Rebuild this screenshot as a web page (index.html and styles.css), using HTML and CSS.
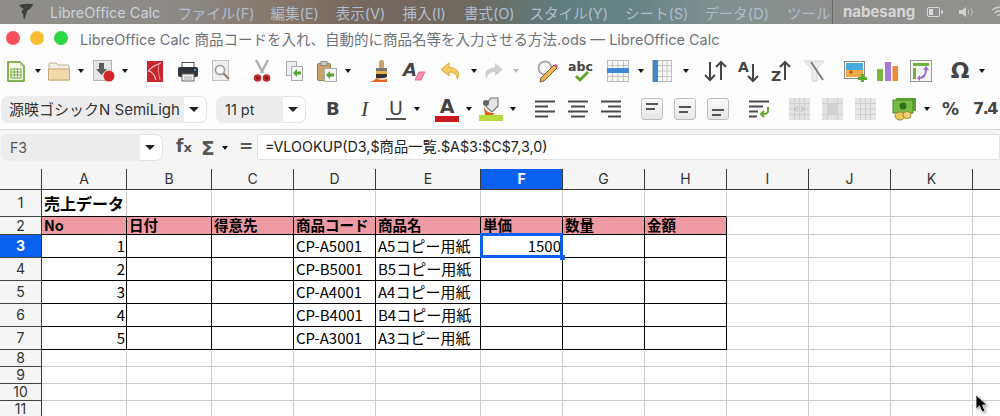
FILE: index.html
```html
<!DOCTYPE html>
<html lang="ja">
<head>
  <meta charset="UTF-8" />
  <title>LibreOffice Calc</title>
  <link rel="stylesheet" href="styles.css">
</head>
<body>
  <!-- macのメニューバー -->
  <div class="menubar">
    <svg class="ml-18" width="16" height="18" viewBox="0 0 16 18"><path d="M1 2 Q8 0 15 1 Q14 5 10 7 Q8 9 8 12 L6 17 L5 11 Q2 8 6 6 Q3 5 1 2Z" fill="#3f3f3f"/></svg>
    <span class="menu-item app ml-16">LibreOffice Calc</span>
    <span class="menu-item ml-17">ファイル(F)</span>
    <span class="menu-item ml-16">編集(E)</span>
    <span class="menu-item ml-17">表示(V)</span>
    <span class="menu-item ml-17">挿入(I)</span>
    <span class="menu-item ml-18">書式(O)</span>
    <span class="menu-item ml-15">スタイル(Y)</span>
    <span class="menu-item ml-17">シート(S)</span>
    <span class="menu-item ml-16">データ(D)</span>
    <span class="menu-item menu-cut">ツール</span>
    <span class="menu-user">nabesang</span>
    <svg class="ml-12" width="16" height="12" viewBox="0 0 16 12"><rect x="0.500" y="1.500" width="12" height="9" rx="1.500" fill="none" stroke="#d8d8d8"/><rect x="2" y="3" width="4" height="6" fill="#d8d8d8"/><rect x="14" y="4.500" width="2" height="3" fill="#d8d8d8"/></svg>
    <svg class="ml-16" width="16" height="12" viewBox="0 0 16 12"><path d="M0 4H3L7 1V11L3 8H0Z" fill="#d0d0d0"/><path d="M9 3Q11 6 9 9M11.500 1.500Q15 6 11.500 10.500" fill="none" stroke="#c4c4c4"/></svg>
    <svg class="ml-16" width="18" height="13" viewBox="0 0 18 13"><path d="M1 4Q9 -2 17 4M3.500 7Q9 2.500 14.500 7M6 10Q9 7.500 12 10" fill="none" stroke="#cfcfcf" stroke-width="1.300"/></svg>
  </div>

  <div class="titlebar">
    <i class="light red"></i><i class="light yellow"></i><i class="light green"></i>
    <span class="title">LibreOffice Calc 商品コードを入れ、自動的に商品名等を入力させる方法.ods — LibreOffice Calc</span>
  </div>

  <!-- 標準ツールバー -->
  <div class="toolbar tb-main">
    <svg width="18" height="21" viewBox="0 0 18 21"><path d="M1 1H13L17 5V20H1Z" fill="#f4f9ea" stroke="#5f9e1c" stroke-width="1.500"/><path d="M13 1V5H17Z" fill="#bcd98e"/><rect x="4" y="8" width="10" height="9" fill="#fff" stroke="#6fa83a"/><path d="M4 11H14M4 14H14M7.300 8V17M10.600 8V17" stroke="#6fa83a"/></svg>
    <span class="drop ml-10"></span>
    <svg class="ml-7" width="22" height="19" viewBox="0 0 22 19"><path d="M1 18V2Q1 1 2 1H8L10 3H20Q21 3 21 4V18Z" fill="#f3f0ea" stroke="#c6ad85"/><path d="M0.500 7H21.500V18H0.500Z" fill="#f2d9ae" stroke="#c9a873"/></svg>
    <span class="drop ml-8"></span>
    <svg class="ml-9" width="22" height="22" viewBox="0 0 22 22"><rect x="0.500" y="0.500" width="18" height="20" fill="#e6e6e6" stroke="#b5b5b5"/><path d="M6 3H11V9H14L8.500 15L3 9H6Z" fill="#5b5b5b"/><circle cx="16" cy="16" r="5.500" fill="#d3262b"/></svg>
    <span class="drop ml-7"></span>
    <svg class="ml-19" width="16" height="21" viewBox="0 0 16 21"><rect width="16" height="21" fill="#c8262e"/><path d="M14 2Q5 5 1.500 10Q7 11 9 19" fill="none" stroke="#f7d5d5" stroke-width="1.200"/><path d="M12 2Q10 10 13 19" fill="none" stroke="#e98b8f"/></svg>
    <svg class="ml-15" width="20" height="19" viewBox="0 0 20 19"><rect x="4" y="0.500" width="12" height="6" fill="#fff" stroke="#555"/><rect x="0" y="5" width="20" height="10" rx="2" fill="#2f3337"/><rect x="16" y="7" width="2" height="2" fill="#2ea7e0"/><rect x="4" y="12" width="12" height="7" fill="#f2f2f2" stroke="#666"/><path d="M6 15H14M6 17H14" stroke="#aaa"/></svg>
    <svg class="ml-14" width="18" height="22" viewBox="0 0 18 22"><rect x="0.500" y="0.500" width="16" height="20" fill="#eee" stroke="#c4c4c4"/><circle cx="8" cy="10" r="4.500" fill="#fafafa" stroke="#999" stroke-width="1.500"/><path d="M11.500 13.500L17 19" stroke="#8a7a66" stroke-width="2"/></svg>
    <svg class="ml-23" width="18" height="23" viewBox="0 0 18 23"><path d="M3 0L10 13M15 0L8 13" stroke="#aeb1b4" stroke-width="2.500"/><circle cx="4.500" cy="18" r="3.800" fill="#c1272d"/><circle cx="13.500" cy="18" r="3.800" fill="#c1272d"/><circle cx="4.500" cy="18" r="1.300" fill="#7d1015"/><circle cx="13.500" cy="18" r="1.300" fill="#7d1015"/></svg>
    <svg class="ml-15" width="17" height="20" viewBox="0 0 17 20"><rect x="0.500" y="0.500" width="10" height="14" fill="#eee" stroke="#aaa"/><rect x="5.500" y="5.500" width="11" height="14" fill="#f5f5f5" stroke="#aaa"/><path d="M7 12L11 8V10.500H15V13.500H11V16Z" fill="#55a630"/></svg>
    <svg class="ml-14" width="20" height="21" viewBox="0 0 20 21"><rect x="0.500" y="2.500" width="13" height="17" rx="1" fill="#c9a26a" stroke="#9b7a48"/><rect x="4" y="0.500" width="6" height="4" fill="#ccc" stroke="#888"/><rect x="7.500" y="7.500" width="12" height="13" fill="#f5f5f5" stroke="#aaa"/><path d="M9 14L13 10V12.500H17V15.500H13V18Z" fill="#55a630"/></svg>
    <span class="drop ml-8"></span>
    <svg class="ml-18" width="20" height="23" viewBox="0 0 20 23"><rect x="10" y="0" width="5" height="9" rx="2" fill="#c9a26a"/><rect x="7" y="8" width="11" height="3" fill="#777"/><path d="M7 11H18V17Q14 19 7 18Z" fill="#e8b04a"/><path d="M7 14H18V17Q14 19 7 18Z" fill="#33312e"/><path d="M0 22H18V19Q10 21 7 18Q6 21 0 22Z" fill="#e8631c"/></svg>
    <svg class="ml-14" width="22" height="20" viewBox="0 0 22 20"><text class="svg-a" x="0" y="15">A</text><path d="M12 19L16 11H22L18 19Z" fill="#f58cb4" stroke="#e56c9a"/></svg>
    <svg class="ml-16" width="20" height="16" viewBox="0 0 20 16"><path d="M8 0L0 6.500L8 13V9Q15 8.500 16.500 16Q21 6 8 4Z" fill="#f4c95d" stroke="#dca63a"/></svg>
    <span class="drop ml-10"></span>
    <svg class="ml-8" width="18" height="16" viewBox="0 0 18 16"><path d="M10 0L18 6.500L10 13V9Q3 8.500 1.500 16Q-3 6 10 4Z" fill="#cfcfcf"/></svg>
    <span class="drop off ml-10"></span>
    <svg class="ml-17" width="23" height="23" viewBox="0 0 23 23"><circle cx="9" cy="8" r="6.500" fill="#fbfbfb" stroke="#aaa" stroke-width="2"/><path d="M21 8L8 21L4 22L5 18L18 5Z" fill="#f0b757" stroke="#7b5b2e"/><path d="M18 5L21 8L22 6L20 4Z" fill="#e2557a"/></svg>
    <svg class="ml-9" width="24" height="22" viewBox="0 0 24 22"><text class="svg-abc" x="0" y="11">abc</text><path d="M8 16L12 20L20 12" fill="none" stroke="#62a82c" stroke-width="3"/></svg>
    <svg class="ml-15" width="22" height="22" viewBox="0 0 22 22"><rect x="0.500" y="0.500" width="21" height="21" fill="#f7f7f7" stroke="#bbb"/><path d="M0 5.500H22M0 16.500H22M5.500 0V22M11 0V22M16.500 0V22" stroke="#c4c4c4"/><rect y="8" width="22" height="5" fill="#3f87d9"/></svg>
    <span class="drop ml-9"></span>
    <svg class="ml-8" width="20" height="22" viewBox="0 0 20 22"><rect x="0.500" y="0.500" width="19" height="21" fill="#f7f7f7" stroke="#bbb"/><path d="M0 5.500H20M0 11H20M0 16.500H20M10.500 0V22M15 0V22" stroke="#c4c4c4"/><rect x="1" width="5" height="22" fill="#3f87d9"/></svg>
    <span class="drop ml-11"></span>
    <svg class="ml-15" width="23" height="22" viewBox="0 0 23 22"><path d="M6 2V20M1 15L6 20L11 15M17 20V2M12 7L17 2L22 7" fill="none" stroke="#444" stroke-width="2"/></svg>
    <svg class="ml-11" width="23" height="23" viewBox="0 0 23 23"><text class="svg-sort" x="0" y="12">A</text><path d="M15 4V21M10 16L15 21L20 16" fill="none" stroke="#444" stroke-width="2"/></svg>
    <svg class="ml-10" width="22" height="23" viewBox="0 0 22 23"><text class="svg-sort" x="0" y="21">Z</text><path d="M14 20V2M9 7L14 2L19 7" fill="none" stroke="#444" stroke-width="2"/></svg>
    <svg class="ml-11" width="21" height="20" viewBox="0 0 21 20"><path d="M0 0H20L13 8V20H8V8Z" fill="#ececec" stroke="#d4d4d4"/><path d="M7 1L19 19" stroke="#777" stroke-width="1.800"/></svg>
    <svg class="ml-19" width="23" height="21" viewBox="0 0 23 21"><rect x="0.500" y="0.500" width="20" height="17" fill="#fff" stroke="#888"/><rect x="2" y="2" width="17" height="7" fill="#4aa8e0"/><rect x="2" y="9" width="17" height="7" fill="#eeaa44"/><circle cx="7" cy="11" r="1.500" fill="#d8421f"/><path d="M14 16H17V13H20V16H23V19H20V21H17V19H14Z" fill="#58b030"/></svg>
    <svg class="ml-10" width="21" height="20" viewBox="0 0 21 20"><rect x="0" y="8" width="6" height="12" fill="#79b83a"/><rect x="8" y="1" width="6" height="19" fill="#ab7ad8"/><rect x="15.500" y="5" width="5.500" height="15" fill="#ef8a3c"/></svg>
    <svg class="ml-12" width="22" height="22" viewBox="0 0 22 22"><rect x="0.500" y="0.500" width="21" height="21" fill="#f5f5f5" stroke="#999"/><rect x="3" y="3" width="16" height="3" fill="#6fb43a"/><rect x="3" y="8" width="3" height="11" fill="#6fb43a"/><path d="M9 18Q16 18 16 9" fill="none" stroke="#9a6ad0" stroke-width="2"/><path d="M13 10L16 6L19 10ZM10 15V21L7 18Z" fill="#9a6ad0"/></svg>
    <span class="glyph omega ml-18">Ω</span>
    <span class="drop ml-9"></span>
  </div>

  <!-- 書式ツールバー -->
  <div class="toolbar tb-format">
    <div class="combo font-box"><span class="combo-text">源暎ゴシックN SemiLigh</span><span class="combo-btn"></span></div>
    <div class="combo size-box ml-9"><span class="combo-text">11 pt</span><span class="combo-btn"></span></div>
    <span class="glyph bold ml-20">B</span>
    <span class="glyph italic">I</span>
    <span class="glyph under">U</span>
    <span class="drop ml-8"></span>
    <span class="color-a ml-15"><b>A</b><i class="bar-red"></i></span>
    <span class="drop ml-7"></span>
    <svg class="ml-7" width="24" height="24" viewBox="0 0 24 24"><path d="M6 8L12 1H19V9L13 15Q9 12 6 8Z" fill="#e4e4e4" stroke="#777" stroke-width="1.200"/><circle cx="7" cy="6" r="3" fill="#666"/><path d="M5 10Q8 17 16 16L14 18H6Z" fill="#d8641c"/><rect y="18" width="24" height="6" fill="#b5dc3c"/></svg>
    <span class="drop ml-7"></span>
    <svg class="ml-19" width="20" height="18" viewBox="0 0 20 18"><path d="M0 1.500H20M0 6.500H13M0 11.500H20M0 16.500H13" stroke="#4a4a4a" stroke-width="2"/></svg>
    <svg class="ml-13" width="20" height="18" viewBox="0 0 20 18"><path d="M0 1.500H20M3 6.500H17M0 11.500H20M3 16.500H17" stroke="#4a4a4a" stroke-width="2"/></svg>
    <svg class="ml-13" width="20" height="18" viewBox="0 0 20 18"><path d="M0 1.500H20M7 6.500H20M0 11.500H20M7 16.500H20" stroke="#4a4a4a" stroke-width="2"/></svg>
    <span class="valign top ml-20"><i></i><i class="short"></i></span>
    <span class="valign middle ml-11"><i></i><i class="short"></i></span>
    <span class="valign bottom ml-11"><i></i><i class="short"></i></span>
    <svg class="ml-20" width="21" height="18" viewBox="0 0 21 18"><path d="M0 1.500H20M0 6.500H14M0 11.500H9M0 16.500H8" stroke="#4a4a4a" stroke-width="2"/><path d="M19 7V11Q19 14 13 14M15 11L12 14L15 17" fill="none" stroke="#62a82c" stroke-width="2"/></svg>
    <svg class="ml-19 merge" width="21" height="22" viewBox="0 0 21 22"><rect width="21" height="22" fill="#e2e2e2"/><path d="M0 5.500H21M0 11H21M0 16.500H21M5.500 0V22M10.500 0V22M15.500 0V22" stroke="#cfcfcf"/><path d="M9 8L6 11L9 14M12 8L15 11L12 14" fill="none" stroke="#bbb"/></svg>
    <svg class="ml-12 merge" width="21" height="22" viewBox="0 0 21 22"><rect width="21" height="22" fill="#e2e2e2"/><path d="M0 5.500H21M0 16.500H21M5.500 0V22M15.500 0V22" stroke="#cfcfcf"/><rect x="5" y="6" width="11" height="10" fill="#d2d2d2"/></svg>
    <svg class="ml-12 merge" width="21" height="22" viewBox="0 0 21 22"><rect width="21" height="22" fill="#e6e6e6"/><path d="M0 5.500H21M0 11H21M0 16.500H21M5.500 0V22M10.500 0V22M15.500 0V22" stroke="#cfcfcf"/></svg>
    <svg class="ml-17" width="23" height="22" viewBox="0 0 23 22"><rect x="3" y="0" width="20" height="13" fill="#5fa336"/><rect x="0" y="2" width="20" height="13" fill="#79bb45" stroke="#4c8a28"/><circle cx="10" cy="8" r="3.500" fill="#2f6e18"/><ellipse cx="7" cy="18" rx="5" ry="4" fill="#e8c75a" stroke="#a5892f"/><ellipse cx="14" cy="17" rx="4" ry="3.500" fill="#edd277" stroke="#a5892f"/></svg>
    <span class="drop ml-8"></span>
    <span class="glyph percent ml-12">%</span>
    <span class="glyph number ml-13">7.4</span>
  </div>

  <!-- 数式バー -->
  <div class="formula-bar">
    <div class="combo name-box"><span class="combo-text">F3</span><span class="combo-btn"></span></div>
    <span class="glyph fx">f<small>x</small></span>
    <span class="glyph sigma">Σ</span>
    <span class="drop ml-5"></span>
    <span class="glyph equal">=</span>
    <div class="formula-input">=VLOOKUP(D3,$商品一覧.$A$3:$C$7,3,0)</div>
  </div>

  <div class="sheet">
    <table>
      <colgroup>
        <col class="col-head"><col class="col-85"><col class="col-85"><col class="col-82"><col class="col-82"><col class="col-105"><col class="col-82"><col class="col-82"><col class="col-82"><col class="col-82"><col class="col-82"><col class="col-82"><col class="col-82">
      </colgroup>
      <tr class="r-head">
        <th></th><th>A</th><th>B</th><th>C</th><th>D</th><th>E</th><th class="sel">F</th><th>G</th><th>H</th><th>I</th><th>J</th><th>K</th><th></th>
      </tr>
      <tr class="r-27">
        <th>1</th><td class="heading line-b">売上データ</td><td class="line-b"></td><td class="line-b"></td><td class="line-b"></td><td class="line-b"></td><td class="line-b"></td><td class="line-b"></td><td class="line-b"></td><td></td><td></td><td></td><td></td>
      </tr>
      <tr class="r-18">
        <th>2</th><td class="label">No</td><td class="label">日付</td><td class="label">得意先</td><td class="label">商品コード</td><td class="label">商品名</td><td class="label">単価</td><td class="label">数量</td><td class="label">金額</td><td></td><td></td><td></td><td></td>
      </tr>
      <tr class="r-23">
        <th class="sel">3</th><td class="box num">1</td><td class="box"></td><td class="box"></td><td class="box">CP-A5001</td><td class="box">A5コピー用紙</td><td class="box num active">1500<span class="cursor-box"></span></td><td class="box"></td><td class="box"></td><td></td><td></td><td></td><td></td>
      </tr>
      <tr class="r-23">
        <th>4</th><td class="box num">2</td><td class="box"></td><td class="box"></td><td class="box">CP-B5001</td><td class="box">B5コピー用紙</td><td class="box"></td><td class="box"></td><td class="box"></td><td></td><td></td><td></td><td></td>
      </tr>
      <tr class="r-23">
        <th>5</th><td class="box num">3</td><td class="box"></td><td class="box"></td><td class="box">CP-A4001</td><td class="box">A4コピー用紙</td><td class="box"></td><td class="box"></td><td class="box"></td><td></td><td></td><td></td><td></td>
      </tr>
      <tr class="r-23">
        <th>6</th><td class="box num">4</td><td class="box"></td><td class="box"></td><td class="box">CP-B4001</td><td class="box">B4コピー用紙</td><td class="box"></td><td class="box"></td><td class="box"></td><td></td><td></td><td></td><td></td>
      </tr>
      <tr class="r-23">
        <th>7</th><td class="box num">5</td><td class="box"></td><td class="box"></td><td class="box">CP-A3001</td><td class="box">A3コピー用紙</td><td class="box"></td><td class="box"></td><td class="box"></td><td></td><td></td><td></td><td></td>
      </tr>
      <tr class="r-17"><th>8</th><td></td><td></td><td></td><td></td><td></td><td></td><td></td><td></td><td></td><td></td><td></td><td></td></tr>
      <tr class="r-17"><th>9</th><td></td><td></td><td></td><td></td><td></td><td></td><td></td><td></td><td></td><td></td><td></td><td></td></tr>
      <tr class="r-17"><th>10</th><td></td><td></td><td></td><td></td><td></td><td></td><td></td><td></td><td></td><td></td><td></td><td></td></tr>
      <tr class="r-17"><th>11</th><td></td><td></td><td></td><td></td><td></td><td></td><td></td><td></td><td></td><td></td><td></td><td></td></tr>
    </table>
    <svg class="mouse" width="18" height="20" viewBox="0 0 18 20"><path d="M2 1V15L5.500 12L8 18L11 17L8.500 11H13Z" fill="#000" stroke="#fff" stroke-width="0.800"/></svg>
  </div>
</body>
</html>
```

FILE: styles.css
```css
* {
  box-sizing: border-box;
}
html, body {
  margin: 0;
  height: 416px;
  overflow: hidden;
}
body {
  font-family: Inter, "Noto Sans CJK JP", sans-serif;
  background: #fff;
  color: #333;
}
svg {
  overflow: visible;
}

/* margin helpers */
.ml-5 { margin-left: 5px; }
.ml-7 { margin-left: 7px; }
.ml-8 { margin-left: 8px; }
.ml-9 { margin-left: 9px; }
.ml-10 { margin-left: 10px; }
.ml-11 { margin-left: 11px; }
.ml-12 { margin-left: 12px; }
.ml-13 { margin-left: 13px; }
.ml-14 { margin-left: 14px; }
.ml-15 { margin-left: 15px; }
.ml-16 { margin-left: 16px; }
.ml-17 { margin-left: 17px; }
.ml-18 { margin-left: 18px; }
.ml-19 { margin-left: 19px; }
.ml-20 { margin-left: 20px; }
.ml-23 { margin-left: 23px; }

/* menu bar */
.menubar {
  height: 24px;
  display: flex;
  align-items: center;
  overflow: hidden;
  background: linear-gradient(90deg, #8f8e8b 0, #8d8a86 180px, #85776b 280px, #76695f 350px, #6f6860 470px, #5f7d7d 560px, #668585 640px, #82908f 720px, #8e8f8d 830px, #91918e 1000px);
}
.menu-item {
  font-size: 14.500px;
  color: #b0bccd;
  white-space: nowrap;
}
.menu-item.app {
  color: #ccd2dc;
}
.menu-cut {
  width: 45px;
  margin-left: 18px;
  overflow: hidden;
  flex: none;
}
.menu-user {
  padding-left: 10px;
  border-left: 1px solid #6d6d6d;
  font-size: 15px;
  line-height: 24px;
  font-weight: 700;
  color: #d6d6d6;
  white-space: nowrap;
}
.menubar svg {
  flex: none;
}

/* title bar */
.titlebar {
  height: 28px;
  display: flex;
  align-items: center;
  padding-left: 6px;
  background: #fdfdfd;
}
.light {
  flex: none;
  width: 14px;
  height: 14px;
  border-radius: 50%;
  margin-right: 10px;
}
.red { background: #f9515c; }
.yellow { background: #fdbd32; }
.green { background: #2fd644; }
.title {
  margin-left: 2px;
  font-size: 14.500px;
  color: #6e7378;
  white-space: nowrap;
}

/* toolbars */
.toolbar {
  display: flex;
  align-items: center;
  background: #fdfdfd;
  white-space: nowrap;
}
.toolbar svg {
  flex: none;
}
.tb-main {
  height: 38px;
  padding-left: 7px;
}
.tb-format {
  height: 40px;
  padding-left: 1px;
  padding-bottom: 1px;
  border-bottom: 1px solid #d9d9d9;
}
.drop {
  flex: none;
  width: 0;
  height: 0;
  border-left: 3.500px solid transparent;
  border-right: 3.500px solid transparent;
  border-top: 4px solid #111;
}
.drop.off {
  border-top-color: #bbb;
}
.svg-a {
  font: italic 700 18px "DejaVu Sans", sans-serif;
  fill: #444;
}
.svg-abc {
  font: 700 12.500px "DejaVu Sans", sans-serif;
  fill: #444;
}
.svg-sort {
  font: 700 14px "DejaVu Sans", sans-serif;
  fill: #444;
}
.glyph {
  flex: none;
  font-family: "DejaVu Sans", sans-serif;
  color: #444;
  line-height: 1.200;
}
.omega {
  width: 20px;
  font-size: 22px;
  font-weight: 700;
  text-align: center;
}
.bold {
  width: 14px;
  font-size: 18px;
  font-weight: 700;
}
.italic {
  width: 12px;
  margin-left: 21px;
  font-family: "Liberation Serif", serif;
  font-size: 22px;
  font-style: italic;
}
.under {
  width: 20px;
  margin-left: 13px;
  font-size: 19px;
  line-height: 20px;
  text-align: center;
  border-bottom: 2px solid #555;
}
.color-a {
  flex: none;
  width: 24px;
  display: flex;
  flex-direction: column;
  align-items: center;
}
.color-a b {
  font: 700 19px/19px "DejaVu Sans", sans-serif;
  color: #444;
}
.bar-red {
  width: 24px;
  height: 6px;
  background: #c9191c;
}
.valign {
  flex: none;
  width: 22px;
  height: 22px;
  display: flex;
  flex-direction: column;
  gap: 3px;
  padding: 0 4px;
  border: 1px solid #bdbdbd;
  border-radius: 3px;
  background: linear-gradient(#fafafa, #e6e6e6);
}
.valign i {
  display: block;
  height: 2px;
  background: #555;
}
.valign i.short {
  width: 9px;
}
.valign.top { justify-content: flex-start; padding-top: 4px; }
.valign.middle { justify-content: center; }
.valign.bottom { justify-content: flex-end; padding-bottom: 3px; }
.percent {
  width: 18px;
  font-size: 17px;
  font-weight: 700;
  letter-spacing: -2px;
}
.number {
  width: 24px;
  font-size: 16px;
  font-weight: 700;
  letter-spacing: -1.500px;
}

/* combo boxes */
.combo {
  flex: none;
  display: flex;
  height: 27px;
  background: #ededed;
  border-radius: 7px;
  overflow: hidden;
}
.combo-text {
  flex: 1;
  min-width: 0;
  padding-left: 9px;
  font-size: 14.500px;
  line-height: 27px;
  color: #333;
  white-space: nowrap;
}
.combo-btn {
  flex: none;
  width: 23px;
  position: relative;
  background: #fff;
  border: 1px solid #e2e2e2;
  border-left: none;
  border-radius: 0 7px 7px 0;
}
.combo-btn::after {
  content: "";
  position: absolute;
  left: 5px;
  top: 10px;
  border-left: 5.500px solid transparent;
  border-right: 5.500px solid transparent;
  border-top: 5.500px solid #222;
}
.font-box { width: 206px; }
.font-box .combo-text { padding-left: 8px; font-size: 15px; }
.size-box { width: 90px; }
.name-box { width: 162px; }
.name-box .combo-text { font-size: 14px; color: #555; }

/* formula bar */
.formula-bar {
  height: 39px;
  display: flex;
  align-items: flex-start;
  padding: 4px 0 0 1px;
  background: #f5f5f5;
}
.formula-bar .glyph {
  margin-top: 2px;
}
.formula-bar .drop {
  margin-top: 12px;
}
.fx {
  width: 17px;
  margin-left: 13px;
  font-size: 17px;
  font-weight: 700;
  color: #555;
}
.fx small {
  font-size: 13px;
}
.sigma {
  width: 16px;
  margin-left: 8px;
  font-size: 20px;
  font-weight: 700;
  color: #555;
}
.equal {
  width: 11px;
  margin-left: 11px;
  font-size: 17px;
  font-weight: 700;
  color: #555;
}
.formula-input {
  flex: 1;
  height: 26px;
  margin-left: 7px;
  padding-left: 7px;
  background: #fff;
  border: 1px solid #e0e0e0;
  border-radius: 2px;
  font-size: 14.300px;
  line-height: 24px;
  color: #222;
  white-space: nowrap;
}

/* sheet */
.sheet {
  position: relative;
  height: 247px;
  overflow: hidden;
}
table {
  width: 1030px;
  table-layout: fixed;
  border-collapse: separate;
  border-spacing: 0;
}
.col-head { width: 42px; }
.col-85 { width: 85px; }
.col-82 { width: 82px; }
.col-105 { width: 105px; }
th, td {
  padding: 0;
  white-space: nowrap;
  border-right: 1px solid #cccccc;
  border-bottom: 1px solid #cccccc;
}
th {
  font-weight: 400;
  font-size: 14px;
  line-height: 16px;
  color: #333;
  background: #f5f5f5;
  border-right-color: #3a3a3a;
}
td {
  padding-left: 2px;
  padding-right: 1px;
  font-family: "Noto Sans CJK JP", sans-serif;
  font-size: 15px;
  line-height: 20px;
  color: #000;
  background: #fff;
}
.r-head { height: 21px; }
.r-head th {
  border-bottom-color: #3a3a3a;
}
.r-27 { height: 27px; }
.r-18 { height: 18px; }
.r-23 { height: 23px; }
.r-17 { height: 17px; }
tr > th:first-child {
  border-bottom-color: #444;
}
th.sel {
  background: #0a60ee;
  color: #fff;
  font-weight: 700;
}
.heading {
  font-size: 16px;
  font-weight: 700;
}
.line-b {
  border-bottom-color: #000;
}
.label {
  font-size: 14.500px;
  font-weight: 700;
  line-height: 15px;
  vertical-align: top;
  background: #ed9aa3;
  border-right-color: #000;
  border-bottom-color: #000;
}
.box {
  border-right-color: #000;
  border-bottom-color: #000;
}
.num {
  text-align: right;
}
.active {
  position: relative;
}
.cursor-box {
  position: absolute;
  left: -1px;
  right: -1px;
  top: -2px;
  bottom: -1px;
  border: 3px solid #0a60ee;
}
.cursor-box::after {
  content: "";
  position: absolute;
  right: -5px;
  bottom: -5px;
  width: 5px;
  height: 5px;
  background: #0a60ee;
}
.mouse {
  position: absolute;
  left: 974px;
  top: 225px;
  filter: drop-shadow(1px 1px 1px rgba(0,0,0,0.4));
}
```
